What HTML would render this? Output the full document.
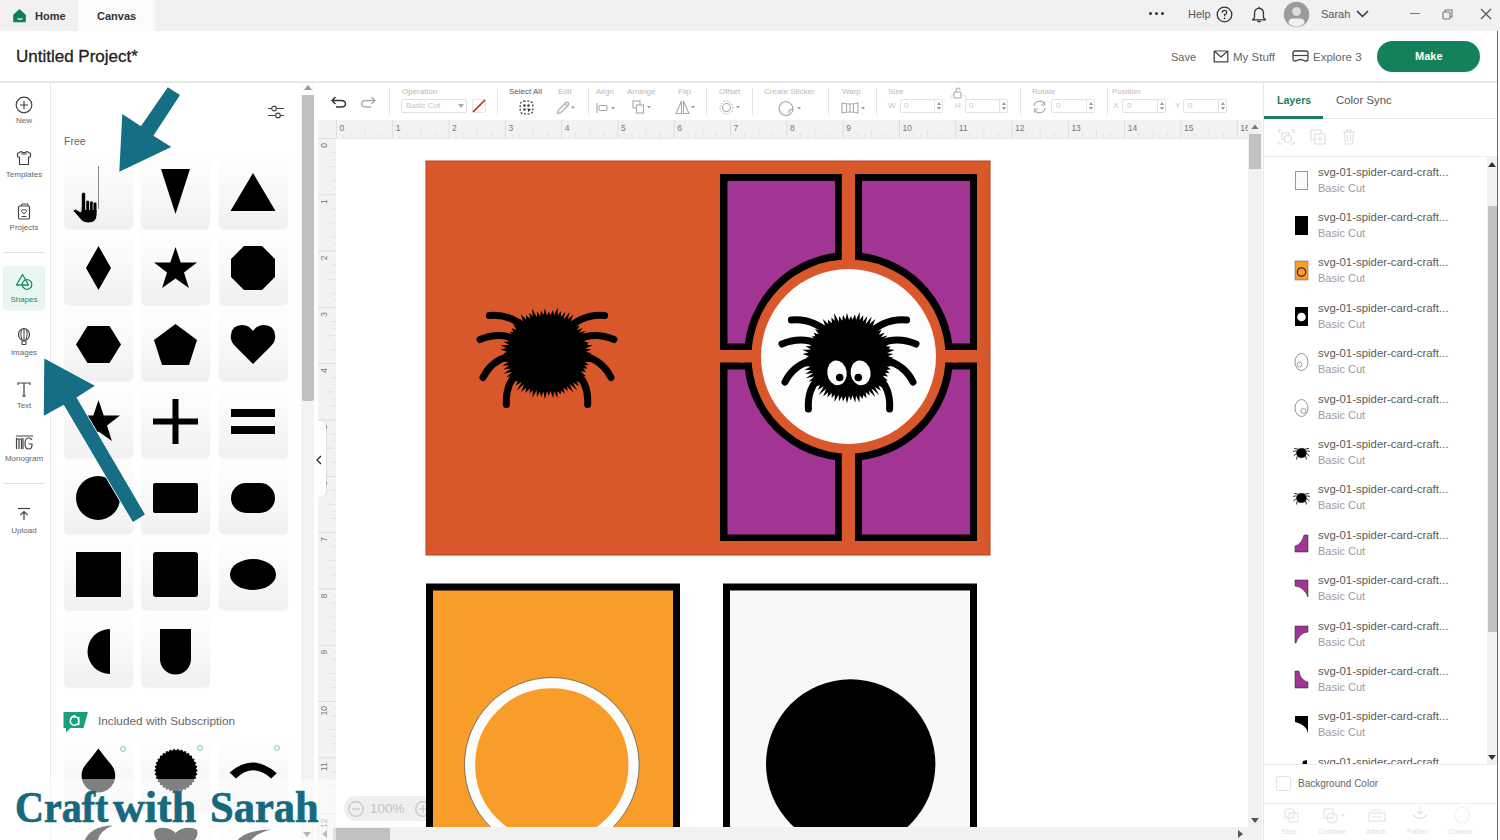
<!DOCTYPE html>
<html><head><meta charset="utf-8">
<style>
*{margin:0;padding:0;box-sizing:border-box}
html,body{width:1500px;height:840px;overflow:hidden;background:#fff;font-family:"Liberation Sans",sans-serif;color:#333}
.a{position:absolute}
.t{position:absolute;white-space:nowrap;line-height:1}
svg{position:absolute;overflow:visible}
.inp{position:absolute;height:14px;border:1px solid #e4e4e4;border-radius:2px}
.wm{top:786px;font-family:'Liberation Serif',serif;font-weight:bold;font-size:44px;color:#166a80;-webkit-text-stroke:0.7px #166a80;transform-origin:0 0}
.tile{position:absolute;width:69px;height:74px;border-radius:5px;background:linear-gradient(#fefefe 0%,#f9f9f9 45%,#f0f0f0 100%);box-shadow:0 1px 1.5px rgba(0,0,0,0.05)}
</style></head><body>
<!-- TITLE BAR -->
<div class="a" style="left:0;top:0;width:1500px;height:31px;background:#f1f1f1"></div>
<div class="a" style="left:78px;top:0;width:77px;height:31px;background:#fbfbfb"></div>
<svg style="left:12.5px;top:9px" width="13" height="14" viewBox="0 0 13 14"><path d="M1,6 L6.5,1.2 L12,6 L12,12.5 L1,12.5Z" fill="#0f7f52" stroke="#0f7f52" stroke-width="1.6" stroke-linejoin="round"/><path d="M4.5,9.5 Q7,11 9.5,9.5" stroke="#d9efe5" stroke-width="1.4" fill="none"/></svg>
<div class="t" style="left:35px;top:11px;font-size:11px;font-weight:bold;color:#333">Home</div>
<div class="t" style="left:97px;top:11px;font-size:11px;font-weight:bold;color:#333">Canvas</div>

<!-- HEADER -->
<div class="a" style="left:0;top:31px;width:1497px;height:52px;background:#fff;border-bottom:2px solid #e8e8e8"></div>
<div class="t" style="left:16px;top:48px;font-size:17px;color:#222;-webkit-text-stroke:0.3px #222">Untitled Project*</div>


<!-- title right -->
<div class="a" style="left:1149px;top:12px;width:3px;height:3px;border-radius:50%;background:#333"></div>
<div class="a" style="left:1155px;top:12px;width:3px;height:3px;border-radius:50%;background:#333"></div>
<div class="a" style="left:1161px;top:12px;width:3px;height:3px;border-radius:50%;background:#333"></div>
<div class="t" style="left:1188px;top:9px;font-size:11px;color:#555">Help</div>
<svg style="left:1216px;top:6px" width="17" height="17" viewBox="0 0 17 17"><circle cx="8.5" cy="8.5" r="7.3" fill="none" stroke="#333" stroke-width="1.3"/><path d="M6.2,6.6 Q6.3,4.4 8.5,4.4 Q10.7,4.4 10.7,6.4 Q10.7,7.8 8.6,8.6 L8.6,10.2" fill="none" stroke="#333" stroke-width="1.3"/><circle cx="8.6" cy="12.4" r="0.9" fill="#333"/></svg>
<svg style="left:1251px;top:6px" width="16" height="17" viewBox="0 0 16 17"><path d="M3.5,11.5 L3.5,7.5 Q3.5,2.3 8,2.3 Q12.5,2.3 12.5,7.5 L12.5,11.5 Q13,13 14.5,13.8 L1.5,13.8 Q3,13 3.5,11.5Z" fill="none" stroke="#333" stroke-width="1.3" stroke-linejoin="round"/><path d="M6.5,15 Q8,16.6 9.5,15" fill="none" stroke="#333" stroke-width="1.3"/><path d="M8,0.8 L8,2.3" stroke="#333" stroke-width="1.3"/></svg>
<svg style="left:1283px;top:1px" width="27" height="27" viewBox="0 0 27 27"><circle cx="13.5" cy="13.5" r="12.7" fill="#9b9b9b"/><circle cx="13.5" cy="10.5" r="4.8" fill="#dedede" stroke="#8a8a8a" stroke-width="0.6"/><path d="M5.5,22 Q5.5,17.5 10,17.5 L17,17.5 Q21.5,17.5 21.5,22 Q18,25.8 13.5,25.8 Q9,25.8 5.5,22Z" fill="#efefef"/></svg>
<div class="t" style="left:1321px;top:9px;font-size:11px;color:#555">Sarah</div>
<svg style="left:1356px;top:10px" width="13" height="8" viewBox="0 0 13 8"><path d="M1,1 L6.5,6.5 L12,1" fill="none" stroke="#333" stroke-width="1.5"/></svg>
<div class="a" style="left:1410px;top:13px;width:10px;height:1px;background:#777"></div>
<svg style="left:1442px;top:9px" width="11" height="11" viewBox="0 0 11 11"><rect x="1" y="3" width="7" height="7" fill="none" stroke="#777" stroke-width="1.1" rx="1"/><path d="M3,3 L3,1 L10,1 L10,8 L8,8" fill="none" stroke="#777" stroke-width="1.1"/></svg>
<svg style="left:1480px;top:8px" width="12" height="12" viewBox="0 0 12 12"><path d="M1,1 L11,11 M11,1 L1,11" stroke="#555" stroke-width="1.2"/></svg>
<!-- header right -->
<div class="t" style="left:1171px;top:52px;font-size:11px;color:#666">Save</div>
<svg style="left:1213px;top:49px" width="16" height="14" viewBox="0 0 16 14"><path d="M1.2,2 L1.2,12.8 L14.8,12.8 L14.8,2" fill="none" stroke="#444" stroke-width="1.3" stroke-linejoin="round"/><path d="M1.2,2 L8,8 L14.8,2 M1.2,2 L14.8,2" fill="none" stroke="#444" stroke-width="1.2" stroke-linejoin="round"/></svg>
<div class="t" style="left:1233px;top:52px;font-size:11.5px;color:#666">My Stuff</div>
<svg style="left:1292px;top:50px" width="17" height="12" viewBox="0 0 17 12"><path d="M3,1 L14,1 Q16,1 16,3 L16,9 Q16,11 14,11 L13,11 Q8.5,8 4,11 L3,11 Q1,11 1,9 L1,3 Q1,1 3,1Z" fill="none" stroke="#444" stroke-width="1.3"/><path d="M1,5.5 L16,5.5" stroke="#444" stroke-width="1.2"/></svg>
<div class="t" style="left:1313px;top:52px;font-size:11.5px;color:#666">Explore 3</div>
<div class="a" style="left:1377px;top:41px;width:103px;height:31px;border-radius:16px;background:#148258"></div>
<div class="t" style="left:1415px;top:51px;font-size:11px;font-weight:bold;color:#fff">Make</div>

<!-- LEFT RAIL -->
<div class="a" style="left:0;top:83px;width:51px;height:757px;background:#fff;border-right:1px solid #ebebeb"></div>


<!-- rail items -->
<svg style="left:15px;top:96px" width="18" height="18" viewBox="0 0 18 18"><circle cx="9" cy="9" r="7.8" fill="none" stroke="#444" stroke-width="1.2"/><path d="M9,5 L9,13 M5,9 L13,9" stroke="#444" stroke-width="1.2"/></svg>
<div class="t" style="left:0;width:48px;text-align:center;top:117px;font-size:8px;color:#666">New</div>
<svg style="left:16px;top:150px" width="16" height="16" viewBox="0 0 16 16"><path d="M5,1.5 L1.5,3.5 L1.5,7 L3.5,7 L3.5,14.5 L12.5,14.5 L12.5,7 L14.5,7 L14.5,3.5 L11,1.5 Q8,4 5,1.5Z" fill="none" stroke="#444" stroke-width="1.2" stroke-linejoin="round"/><path d="M5,4 L11,4" stroke="#444" stroke-width="1"/></svg>
<div class="t" style="left:0;width:48px;text-align:center;top:171px;font-size:8px;color:#666">Templates</div>
<svg style="left:17px;top:203px" width="14" height="17" viewBox="0 0 14 17"><rect x="1.5" y="3" width="11" height="13" rx="1.5" fill="none" stroke="#444" stroke-width="1.2"/><path d="M4,3 L5,1 L11,1 L11,3" fill="none" stroke="#444" stroke-width="1"/><path d="M7,11 L4.8,8.8 Q4,7.6 5.2,6.8 Q6.4,6.3 7,7.3 Q7.6,6.3 8.8,6.8 Q10,7.6 9.2,8.8Z" fill="none" stroke="#444" stroke-width="1"/><path d="M4.5,13.5 L9.5,13.5" stroke="#444" stroke-width="1"/></svg>
<div class="t" style="left:0;width:48px;text-align:center;top:224px;font-size:8px;color:#666">Projects</div>
<div class="a" style="left:3px;top:252px;width:42px;height:1px;background:#e3e3e3"></div>
<div class="a" style="left:3px;top:266px;width:42px;height:45px;border-radius:4px;background:#eaf6f1"></div>
<svg style="left:15px;top:273px" width="19" height="18" viewBox="0 0 19 18"><path d="M7.5,1.5 L1.5,12 L13.5,12Z" fill="none" stroke="#1a8a64" stroke-width="1.3" stroke-linejoin="round"/><circle cx="12" cy="11.5" r="4.8" fill="none" stroke="#1a8a64" stroke-width="1.3"/></svg>
<div class="t" style="left:0;width:48px;text-align:center;top:296px;font-size:8px;color:#1a8a64">Shapes</div>
<svg style="left:17px;top:328px" width="14" height="18" viewBox="0 0 14 18"><ellipse cx="7" cy="6.5" rx="5.5" ry="5.8" fill="none" stroke="#444" stroke-width="1.2"/><path d="M7,0.8 L7,12.3 M4.3,1.8 Q3,7 5,12 M9.7,1.8 Q11,7 9,12" fill="none" stroke="#444" stroke-width="1"/><rect x="5" y="13" width="4" height="3.5" rx="0.5" fill="none" stroke="#444" stroke-width="1.1"/></svg>
<div class="t" style="left:0;width:48px;text-align:center;top:349px;font-size:8px;color:#666">Images</div>
<svg style="left:17px;top:382px" width="14" height="15" viewBox="0 0 14 15"><path d="M1,3 L1,1 L13,1 L13,3 M7,1 L7,14 M5,14 L9,14" fill="none" stroke="#444" stroke-width="1.2"/></svg>
<div class="t" style="left:0;width:48px;text-align:center;top:402px;font-size:8px;color:#666">Text</div>
<svg style="left:15px;top:435px" width="19" height="15" viewBox="0 0 19 15"><path d="M1,1 L18,1" stroke="#444" stroke-width="1"/><path d="M1.5,14 L1.5,4 L4,4 L4,14 M4,4 L6.5,4 L6.5,14 M1.5,4 L1.5,3" fill="none" stroke="#444" stroke-width="1.2"/><path d="M8,3 L8,14" stroke="#444" stroke-width="1.2"/><path d="M17,5 Q16,3 13.5,3 Q10,3 10,8.5 Q10,14 13.5,14 Q17,14 17,10 L17,9 L13.5,9" fill="none" stroke="#444" stroke-width="1.2"/></svg>
<div class="t" style="left:0;width:48px;text-align:center;top:455px;font-size:8px;color:#666">Monogram</div>
<div class="a" style="left:3px;top:483px;width:42px;height:1px;background:#e3e3e3"></div>
<svg style="left:17px;top:507px" width="14" height="14" viewBox="0 0 14 14"><path d="M1,1.5 L13,1.5" stroke="#444" stroke-width="1.2"/><path d="M7,13 L7,4.5 M3.5,8 L7,4.5 L10.5,8" fill="none" stroke="#444" stroke-width="1.2"/></svg>
<div class="t" style="left:0;width:48px;text-align:center;top:527px;font-size:8px;color:#666">Upload</div>

<!-- PANEL -->
<div class="a" style="left:51px;top:83px;width:250px;height:757px;background:#fff"></div>
<div class="a" style="left:301px;top:83px;width:15px;height:757px;background:#f3f3f3"></div>
<div class="a" style="left:301px;top:83px;width:15px;height:12px;background:#fafafa"></div>


<!-- panel content -->
<div class="t" style="left:64px;top:136px;font-size:10.5px;color:#666">Free</div>
<svg style="left:267px;top:104px" width="18" height="16" viewBox="0 0 18 16"><path d="M1,4.5 L17,4.5 M1,11.5 L17,11.5" stroke="#444" stroke-width="1.2"/><circle cx="7" cy="4.5" r="2.3" fill="#fff" stroke="#444" stroke-width="1.2"/><circle cx="11" cy="11.5" r="2.3" fill="#fff" stroke="#444" stroke-width="1.2"/></svg>
<div class="tile" style="left:64px;top:155px"></div>
<div class="tile" style="left:141px;top:155px"></div>
<div class="tile" style="left:219px;top:155px"></div>
<div class="tile" style="left:64px;top:231px"></div>
<div class="tile" style="left:141px;top:231px"></div>
<div class="tile" style="left:219px;top:231px"></div>
<div class="tile" style="left:64px;top:307px"></div>
<div class="tile" style="left:141px;top:307px"></div>
<div class="tile" style="left:219px;top:307px"></div>
<div class="tile" style="left:64px;top:384px"></div>
<div class="tile" style="left:141px;top:384px"></div>
<div class="tile" style="left:219px;top:384px"></div>
<div class="tile" style="left:64px;top:460px"></div>
<div class="tile" style="left:141px;top:460px"></div>
<div class="tile" style="left:219px;top:460px"></div>
<div class="tile" style="left:64px;top:536px"></div>
<div class="tile" style="left:141px;top:536px"></div>
<div class="tile" style="left:219px;top:536px"></div>
<div class="tile" style="left:64px;top:613px"></div>
<div class="tile" style="left:141px;top:613px"></div>
<div class="tile" style="left:64px;top:738px"></div>
<div class="tile" style="left:64px;top:814px"></div>
<div class="tile" style="left:141px;top:738px"></div>
<div class="tile" style="left:141px;top:814px"></div>
<div class="tile" style="left:219px;top:738px"></div>
<div class="tile" style="left:219px;top:814px"></div>

<svg style="left:0;top:0" width="300" height="840" viewBox="0 0 300 840">
<path d="M161,169 L190,169 L175.5,214Z" fill="#000"/>
<path d="M253,173 L275.5,211 L230.5,211Z" fill="#000"/>
<path d="M98.5,246 L111,268 L98.5,290 L86,268Z" fill="#000"/>
<path id="star" d="M175.5,247 L180.7,262.5 L197,262.6 L184,272.4 L188.9,288 L175.5,278.5 L162.1,288 L167,272.4 L154,262.6 L170.3,262.5Z" fill="#000"/>
<path d="M244,246 L262,246 L275,259 L275,277 L262,290 L244,290 L231,277 L231,259Z" fill="#000"/>
<path d="M87.5,326 L109.5,326 L121,344.5 L109.5,363 L87.5,363 L76,344.5Z" fill="#000"/>
<path d="M175.5,324 L197,340 L189,365 L162,365 L154,340Z" fill="#000"/>
<path d="M253,364 L235,346 Q230,341 231,335 Q232,325 242,325 Q249,325 253,331 Q257,325 264,325 Q274,325 275,335 Q276,341 271,346Z" fill="#000"/>
<path d="M98.5,400 L103.7,415.5 L120,415.6 L107,425.4 L111.9,441 L98.5,431.5 L85.1,441 L90,425.4 L77,415.6 L93.3,415.5Z" fill="#000"/>
<path d="M172.5,399 L178.5,399 L178.5,418.5 L198,418.5 L198,424.5 L178.5,424.5 L178.5,444 L172.5,444 L172.5,424.5 L153,424.5 L153,418.5 L172.5,418.5Z" fill="#000"/>
<rect x="231" y="409" width="44" height="8" fill="#000"/><rect x="231" y="426" width="44" height="8" fill="#000"/>
<circle cx="98" cy="498" r="22" fill="#000"/>
<rect x="153" y="483" width="45" height="30" rx="2" fill="#000"/>
<rect x="231" y="483" width="44" height="30" rx="15" fill="#000"/>
<rect x="76" y="552" width="45" height="45" fill="#000"/>
<rect x="153" y="552" width="45" height="45" rx="3" fill="#000"/>
<ellipse cx="253" cy="574.5" rx="23" ry="15.5" fill="#000"/>
<path d="M110,629 L110,674 A22.5,22.5 0 0 1 110,629Z" fill="#000"/>
<path d="M160,629 L191,629 L191,659 A15.5,15.5 0 0 1 160,659Z" fill="#000"/>
<!-- subscription shapes -->
<path d="M98.4,748.4 Q104,756 111.6,765.2 A16.8,16.8 0 1 1 85.2,765.2 Q92.8,756 98.4,748.4Z" fill="#000"/>
<path d="M197.8,770.4 L195.9,772.2 L197.4,774.4 L195.2,775.9 L196.3,778.3 L193.9,779.3 L194.5,781.9 L192.0,782.5 L192.1,785.1 L189.5,785.2 L189.1,787.8 L186.5,787.4 L185.7,789.9 L183.2,789.0 L182.0,791.4 L179.7,790.1 L178.0,792.1 L176.0,790.4 L174.0,792.1 L172.3,790.1 L170.0,791.4 L168.8,789.0 L166.3,789.9 L165.5,787.4 L162.9,787.8 L162.5,785.2 L159.9,785.1 L160.0,782.5 L157.5,781.9 L158.1,779.3 L155.7,778.3 L156.8,775.9 L154.6,774.4 L156.1,772.2 L154.2,770.4 L156.1,768.6 L154.6,766.4 L156.8,764.9 L155.7,762.5 L158.1,761.5 L157.5,758.9 L160.0,758.3 L159.9,755.7 L162.5,755.6 L162.9,753.0 L165.5,753.4 L166.3,750.9 L168.8,751.8 L170.0,749.4 L172.3,750.7 L174.0,748.7 L176.0,750.4 L178.0,748.7 L179.7,750.7 L182.0,749.4 L183.2,751.8 L185.7,750.9 L186.5,753.4 L189.1,753.0 L189.5,755.6 L192.1,755.7 L192.0,758.3 L194.5,758.9 L193.9,761.5 L196.3,762.5 L195.2,764.9 L197.4,766.4 L195.9,768.6Z" fill="#000"/>
<path d="M229.6,772.4 Q253,752 276.8,773.2 L271.2,778.5 Q253,762 236,778.5Z" fill="#000"/>
<path d="M84,842 Q90,826 113,825.6 Q100,830 97,842Z" fill="#000"/>
<path d="M158,842 Q152,834 155,830 Q159,827 166,828 Q172,829 175.6,833 Q179,829 185,828 Q193,827 197,830 Q199,836 193,842Z" fill="#000"/>
<path d="M236,842 Q244,830 271.2,829.6 Q254,834 250,842Z" fill="#000"/>
</svg>
<div class="a" style="left:120px;top:745.5px;width:6px;height:6px;border-radius:50%;border:1.2px solid #7bcdb5"></div>
<div class="a" style="left:197px;top:745px;width:6px;height:6px;border-radius:50%;border:1.2px solid #7bcdb5"></div>
<div class="a" style="left:274px;top:745px;width:6px;height:6px;border-radius:50%;border:1.2px solid #7bcdb5"></div>
<svg style="left:63px;top:711px" width="26" height="22" viewBox="0 0 26 22"><path d="M0.5,1 L25,1 L20.5,17 L7.5,17 L3,21.5 L3,17 L0.5,17Z" fill="#17a07a"/><circle cx="11.5" cy="10" r="4.2" fill="none" stroke="#fff" stroke-width="1.5"/><path d="M15.7,6 L15.7,14.2 M7.5,8.5 Q9,4.5 12.5,4.8" fill="none" stroke="#fff" stroke-width="1.5"/></svg>
<div class="t" style="left:98px;top:716px;font-size:11.8px;color:#666">Included with Subscription</div>
<!-- hand cursor -->
<div class="a" style="left:98px;top:166px;width:1px;height:43px;background:#8a8a8a"></div>
<svg style="left:0;top:0" width="120" height="240" viewBox="0 0 120 240"><g stroke="#fff" stroke-width="0.7"><path d="M80.5,207 L96.8,207 L96.8,214.5 Q96.8,222.8 88.5,222.8 Q83,222.8 80,218.5 L73.6,211.5 Q73,209 75.8,209.2 L80.5,212Z" fill="#000"/><rect x="81.4" y="192.3" width="4.2" height="20" rx="2.1" fill="#000"/><rect x="85.8" y="200.2" width="3.9" height="12" rx="1.9" fill="#000"/><rect x="89.6" y="201" width="3.9" height="12" rx="1.9" fill="#000"/><rect x="93.1" y="202" width="3.8" height="12" rx="1.9" fill="#000"/></g><path d="M81.8,210 L96.4,210 L96.4,215 Q96.4,222.2 88.5,222.2 Q83.3,222.2 80.5,218.3 L74.2,211.3 L81.8,214Z" fill="#000"/></svg>

<!-- TOOLBAR -->
<div class="a" style="left:316px;top:83px;width:947px;height:37px;background:#fff;border-left:1px solid #eaeaea"></div>

<!-- panel scrollbar -->
<div class="a" style="left:302px;top:95px;width:11.5px;height:306px;background:#bfbfbf;border-radius:0 0 2px 2px"></div>
<svg style="left:304px;top:85px" width="8" height="5" viewBox="0 0 8 5"><path d="M0,5 L4,0 L8,5Z" fill="#999"/></svg>
<svg style="left:303px;top:832px" width="8" height="5" viewBox="0 0 8 5"><path d="M0,0 L4,5 L8,0Z" fill="#666"/></svg>
<!-- toolbar content -->
<svg style="left:331px;top:96px" width="16" height="12" viewBox="0 0 16 12"><path d="M4.5,1 L1,4.5 L4.5,8 M1,4.5 L10,4.5 Q14.5,4.5 14.5,7.8 Q14.5,11 10,11 L5,11" fill="none" stroke="#333" stroke-width="1.4"/></svg>
<svg style="left:360px;top:96px" width="16" height="12" viewBox="0 0 16 12"><path d="M11.5,1 L15,4.5 L11.5,8 M15,4.5 L6,4.5 Q1.5,4.5 1.5,7.8 Q1.5,11 6,11 L11,11" fill="none" stroke="#aaa" stroke-width="1.3"/></svg>
<div class="a" style="left:389px;top:88px;width:1px;height:27px;background:#e4e4e4"></div>
<div class="t" style="left:402px;top:88px;font-size:8px;color:#b5b5b5">Operation</div>
<div class="a" style="left:401px;top:99px;width:66px;height:14px;border:1px solid #e2e2e2;border-radius:2px"></div>
<div class="t" style="left:406px;top:102px;font-size:8px;color:#c5c5c5">Basic Cut</div>
<svg style="left:458px;top:104px" width="6" height="4" viewBox="0 0 6 4"><path d="M0,0 L3,4 L6,0Z" fill="#aaa"/></svg>
<div class="a" style="left:472px;top:99px;width:14px;height:14px;border:1px solid #e6e6e6;border-radius:2px"></div>
<svg style="left:472px;top:99px" width="14" height="14" viewBox="0 0 14 14"><path d="M1,13 L13,1" stroke="#c81e1e" stroke-width="1.6"/></svg>
<div class="a" style="left:497px;top:88px;width:1px;height:27px;background:#e4e4e4"></div>
<div class="t" style="left:509px;top:88px;font-size:8px;color:#555">Select All</div>
<svg style="left:519px;top:100px" width="15" height="15" viewBox="0 0 15 15"><rect x="1.2" y="1.2" width="12.6" height="12.6" rx="3.5" fill="none" stroke="#444" stroke-width="1.3" stroke-dasharray="2 1.6"/><circle cx="5.5" cy="5.5" r="1.3" fill="#444"/><circle cx="9.5" cy="5.5" r="1.3" fill="#444"/><circle cx="5.5" cy="9.5" r="1.3" fill="#444"/><path d="M8.3,8.3 L12.3,9.6 L10.4,10.4 L9.6,12.3Z" fill="#222"/></svg>
<div class="t" style="left:558px;top:88px;font-size:8px;color:#bbb">Edit</div>
<svg style="left:556px;top:100px" width="20" height="15" viewBox="0 0 20 15"><path d="M1.5,13.5 L2.5,10 L10,2.5 Q11,1.5 12,2.5 L12.5,3 Q13.5,4 12.5,5 L5,12.5Z M9,3.5 L11.5,6" fill="none" stroke="#aaa" stroke-width="1.1"/><path d="M15,6.5 L19,6.5 L17,9Z" fill="#999"/></svg>
<div class="a" style="left:588px;top:88px;width:1px;height:27px;background:#e4e4e4"></div>
<div class="t" style="left:596px;top:88px;font-size:8px;color:#bbb">Align</div>
<svg style="left:596px;top:102px" width="20" height="12" viewBox="0 0 20 12"><path d="M1,1 L1,11" stroke="#aaa" stroke-width="1.1"/><rect x="3" y="3.5" width="8" height="5" rx="1" fill="none" stroke="#aaa" stroke-width="1.1"/><path d="M15,5 L19,5 L17,7.5Z" fill="#999"/></svg>
<div class="t" style="left:627px;top:88px;font-size:8px;color:#bbb">Arrange</div>
<svg style="left:632px;top:100px" width="20" height="15" viewBox="0 0 20 15"><rect x="1" y="1" width="7" height="7" fill="none" stroke="#aaa" stroke-width="1.1"/><rect x="4.5" y="5" width="7" height="8" fill="#fff" stroke="#aaa" stroke-width="1.1"/><path d="M15,6 L19,6 L17,8.5Z" fill="#999"/></svg>
<div class="t" style="left:678px;top:88px;font-size:8px;color:#bbb">Flip</div>
<svg style="left:675px;top:100px" width="21" height="15" viewBox="0 0 21 15"><path d="M6.5,1 L1,13.5 L6.5,13.5Z M8.5,1 L14,13.5 L8.5,13.5Z" fill="none" stroke="#aaa" stroke-width="1.1"/><path d="M16,6 L20,6 L18,8.5Z" fill="#999"/></svg>
<div class="a" style="left:706px;top:88px;width:1px;height:27px;background:#e4e4e4"></div>
<div class="t" style="left:719px;top:88px;font-size:8px;color:#bbb">Offset</div>
<svg style="left:719px;top:100px" width="22" height="15" viewBox="0 0 22 15"><circle cx="7.5" cy="7.5" r="4" fill="none" stroke="#aaa" stroke-width="1.1"/><circle cx="7.5" cy="7.5" r="6.5" fill="none" stroke="#aaa" stroke-width="1" stroke-dasharray="1.5 1.5"/><path d="M17,6 L21,6 L19,8.5Z" fill="#999"/></svg>
<div class="a" style="left:752px;top:88px;width:1px;height:27px;background:#e4e4e4"></div>
<div class="t" style="left:764px;top:88px;font-size:8px;color:#bbb">Create Sticker</div>
<svg style="left:778px;top:100px" width="25" height="17" viewBox="0 0 25 17"><path d="M8.5,1.5 A7,7 0 1 0 15,9.5 Q11,9 10.5,13 M15,9.5 Q15.5,4 8.5,1.5" fill="none" stroke="#aaa" stroke-width="1.2"/><path d="M19,7 L23,7 L21,9.5Z" fill="#999"/></svg>
<div class="a" style="left:828px;top:88px;width:1px;height:27px;background:#e4e4e4"></div>
<div class="t" style="left:842px;top:88px;font-size:8px;color:#bbb">Warp</div>
<svg style="left:841px;top:102px" width="26" height="12" viewBox="0 0 26 12"><path d="M1,1 Q9,3 17,1 L17,11 Q9,9 1,11Z M5.5,2 L5.5,10 M9,2.5 L9,9.5 M12.5,2 L12.5,10" fill="none" stroke="#aaa" stroke-width="1.1"/><path d="M20,5 L24,5 L22,7.5Z" fill="#999"/></svg>
<div class="a" style="left:876px;top:88px;width:1px;height:27px;background:#e4e4e4"></div>
<div class="t" style="left:888px;top:88px;font-size:8px;color:#bbb">Size</div>
<div class="t" style="left:888px;top:102px;font-size:8px;color:#c5c5c5">W</div>
<div class="inp" style="left:900px;top:99px;width:43px"></div><div class="a" style="left:934px;top:99px;width:1px;height:14px;background:#e4e4e4"></div><svg style="left:935px;top:99px" width="8" height="14" viewBox="0 0 8 14"><path d="M2,6 L4,3 L6,6Z M2,8 L4,11 L6,8Z" fill="#9a9a9a"/></svg>
<div class="t" style="left:904px;top:102px;font-size:8px;color:#c8c8c8">0</div>
<svg style="left:949px;top:87px" width="18" height="13" viewBox="0 0 18 13"><rect x="5" y="5" width="7" height="6" rx="1" fill="none" stroke="#aaa" stroke-width="1.1"/><path d="M7,5 L7,3 Q7,1 9,1 Q11,1 11,3" fill="none" stroke="#aaa" stroke-width="1.1"/><path d="M1,12 Q1,8 4,8 M14,8 Q17,8 17,12" fill="none" stroke="#ddd" stroke-width="1"/></svg>
<div class="t" style="left:955px;top:102px;font-size:8px;color:#c5c5c5">H</div>
<div class="inp" style="left:965px;top:99px;width:43px"></div><div class="a" style="left:999px;top:99px;width:1px;height:14px;background:#e4e4e4"></div><svg style="left:1000px;top:99px" width="8" height="14" viewBox="0 0 8 14"><path d="M2,6 L4,3 L6,6Z M2,8 L4,11 L6,8Z" fill="#9a9a9a"/></svg>
<div class="t" style="left:969px;top:102px;font-size:8px;color:#c8c8c8">0</div>
<div class="a" style="left:1020px;top:88px;width:1px;height:27px;background:#e4e4e4"></div>
<div class="t" style="left:1032px;top:88px;font-size:8px;color:#bbb">Rotate</div>
<svg style="left:1032px;top:100px" width="15" height="14" viewBox="0 0 15 14"><path d="M2,6 A5.5,5.5 0 0 1 12.5,4.5 M13,8 A5.5,5.5 0 0 1 2.5,9.5" fill="none" stroke="#aaa" stroke-width="1.2"/><path d="M12.5,1.5 L12.5,5 L9,5 M2.5,12.5 L2.5,9 L6,9" fill="none" stroke="#aaa" stroke-width="1.1"/></svg>
<div class="inp" style="left:1051px;top:99px;width:44px"></div><div class="a" style="left:1086px;top:99px;width:1px;height:14px;background:#e4e4e4"></div><svg style="left:1087px;top:99px" width="8" height="14" viewBox="0 0 8 14"><path d="M2,6 L4,3 L6,6Z M2,8 L4,11 L6,8Z" fill="#9a9a9a"/></svg>
<div class="t" style="left:1056px;top:102px;font-size:8px;color:#c8c8c8">0</div>
<div class="a" style="left:1107px;top:88px;width:1px;height:27px;background:#e4e4e4"></div>
<div class="t" style="left:1112px;top:88px;font-size:8px;color:#bbb">Position</div>
<div class="t" style="left:1113px;top:102px;font-size:8px;color:#c5c5c5">X</div>
<div class="inp" style="left:1122px;top:99px;width:44px"></div><div class="a" style="left:1157px;top:99px;width:1px;height:14px;background:#e4e4e4"></div><svg style="left:1158px;top:99px" width="8" height="14" viewBox="0 0 8 14"><path d="M2,6 L4,3 L6,6Z M2,8 L4,11 L6,8Z" fill="#9a9a9a"/></svg>
<div class="t" style="left:1127px;top:102px;font-size:8px;color:#c8c8c8">0</div>
<div class="t" style="left:1175px;top:102px;font-size:8px;color:#c5c5c5">Y</div>
<div class="inp" style="left:1183px;top:99px;width:44px"></div><div class="a" style="left:1218px;top:99px;width:1px;height:14px;background:#e4e4e4"></div><svg style="left:1219px;top:99px" width="8" height="14" viewBox="0 0 8 14"><path d="M2,6 L4,3 L6,6Z M2,8 L4,11 L6,8Z" fill="#9a9a9a"/></svg>
<div class="t" style="left:1188px;top:102px;font-size:8px;color:#c8c8c8">0</div>

<!-- RULER -->
<div class="a" style="left:314px;top:83px;width:4px;height:757px;background:#fff"></div>
<div class="a" style="left:318px;top:120px;width:930px;height:19px;background:#f2f2f2;border-bottom:1px solid #e6e6e6"></div>
<div class="a" style="left:318px;top:120px;width:19px;height:707px;background:#f2f2f2;border-right:1px solid #e6e6e6"></div>
<div class="a" style="left:336px;top:139px;width:912px;height:688px;background:#fff"></div>
<svg style="left:0;top:0" width="1500" height="840" viewBox="0 0 1500 840" font-family="Liberation Sans, sans-serif">
<path d="M336.5,120 L336.5,138" stroke="#dddddd" stroke-width="1"/>
<text x="339.5" y="130.5" font-size="8.5" fill="#777">0</text>
<path d="M343.5,135 L343.5,138" stroke="#e6e6e6" stroke-width="1"/>
<path d="M350.6,133 L350.6,138" stroke="#e3e3e3" stroke-width="1"/>
<path d="M357.6,135 L357.6,138" stroke="#e6e6e6" stroke-width="1"/>
<path d="M364.6,130 L364.6,138" stroke="#e3e3e3" stroke-width="1"/>
<path d="M371.7,135 L371.7,138" stroke="#e6e6e6" stroke-width="1"/>
<path d="M378.7,133 L378.7,138" stroke="#e3e3e3" stroke-width="1"/>
<path d="M385.8,135 L385.8,138" stroke="#e6e6e6" stroke-width="1"/>
<path d="M392.8,120 L392.8,138" stroke="#dddddd" stroke-width="1"/>
<text x="395.8" y="130.5" font-size="8.5" fill="#777">1</text>
<path d="M399.8,135 L399.8,138" stroke="#e6e6e6" stroke-width="1"/>
<path d="M406.9,133 L406.9,138" stroke="#e3e3e3" stroke-width="1"/>
<path d="M413.9,135 L413.9,138" stroke="#e6e6e6" stroke-width="1"/>
<path d="M420.9,130 L420.9,138" stroke="#e3e3e3" stroke-width="1"/>
<path d="M428.0,135 L428.0,138" stroke="#e6e6e6" stroke-width="1"/>
<path d="M435.0,133 L435.0,138" stroke="#e3e3e3" stroke-width="1"/>
<path d="M442.1,135 L442.1,138" stroke="#e6e6e6" stroke-width="1"/>
<path d="M449.1,120 L449.1,138" stroke="#dddddd" stroke-width="1"/>
<text x="452.1" y="130.5" font-size="8.5" fill="#777">2</text>
<path d="M456.1,135 L456.1,138" stroke="#e6e6e6" stroke-width="1"/>
<path d="M463.2,133 L463.2,138" stroke="#e3e3e3" stroke-width="1"/>
<path d="M470.2,135 L470.2,138" stroke="#e6e6e6" stroke-width="1"/>
<path d="M477.2,130 L477.2,138" stroke="#e3e3e3" stroke-width="1"/>
<path d="M484.3,135 L484.3,138" stroke="#e6e6e6" stroke-width="1"/>
<path d="M491.3,133 L491.3,138" stroke="#e3e3e3" stroke-width="1"/>
<path d="M498.4,135 L498.4,138" stroke="#e6e6e6" stroke-width="1"/>
<path d="M505.4,120 L505.4,138" stroke="#dddddd" stroke-width="1"/>
<text x="508.4" y="130.5" font-size="8.5" fill="#777">3</text>
<path d="M512.4,135 L512.4,138" stroke="#e6e6e6" stroke-width="1"/>
<path d="M519.5,133 L519.5,138" stroke="#e3e3e3" stroke-width="1"/>
<path d="M526.5,135 L526.5,138" stroke="#e6e6e6" stroke-width="1"/>
<path d="M533.5,130 L533.5,138" stroke="#e3e3e3" stroke-width="1"/>
<path d="M540.6,135 L540.6,138" stroke="#e6e6e6" stroke-width="1"/>
<path d="M547.6,133 L547.6,138" stroke="#e3e3e3" stroke-width="1"/>
<path d="M554.7,135 L554.7,138" stroke="#e6e6e6" stroke-width="1"/>
<path d="M561.7,120 L561.7,138" stroke="#dddddd" stroke-width="1"/>
<text x="564.7" y="130.5" font-size="8.5" fill="#777">4</text>
<path d="M568.7,135 L568.7,138" stroke="#e6e6e6" stroke-width="1"/>
<path d="M575.8,133 L575.8,138" stroke="#e3e3e3" stroke-width="1"/>
<path d="M582.8,135 L582.8,138" stroke="#e6e6e6" stroke-width="1"/>
<path d="M589.9,130 L589.9,138" stroke="#e3e3e3" stroke-width="1"/>
<path d="M596.9,135 L596.9,138" stroke="#e6e6e6" stroke-width="1"/>
<path d="M603.9,133 L603.9,138" stroke="#e3e3e3" stroke-width="1"/>
<path d="M611.0,135 L611.0,138" stroke="#e6e6e6" stroke-width="1"/>
<path d="M618.0,120 L618.0,138" stroke="#dddddd" stroke-width="1"/>
<text x="621.0" y="130.5" font-size="8.5" fill="#777">5</text>
<path d="M625.0,135 L625.0,138" stroke="#e6e6e6" stroke-width="1"/>
<path d="M632.1,133 L632.1,138" stroke="#e3e3e3" stroke-width="1"/>
<path d="M639.1,135 L639.1,138" stroke="#e6e6e6" stroke-width="1"/>
<path d="M646.1,130 L646.1,138" stroke="#e3e3e3" stroke-width="1"/>
<path d="M653.2,135 L653.2,138" stroke="#e6e6e6" stroke-width="1"/>
<path d="M660.2,133 L660.2,138" stroke="#e3e3e3" stroke-width="1"/>
<path d="M667.3,135 L667.3,138" stroke="#e6e6e6" stroke-width="1"/>
<path d="M674.3,120 L674.3,138" stroke="#dddddd" stroke-width="1"/>
<text x="677.3" y="130.5" font-size="8.5" fill="#777">6</text>
<path d="M681.3,135 L681.3,138" stroke="#e6e6e6" stroke-width="1"/>
<path d="M688.4,133 L688.4,138" stroke="#e3e3e3" stroke-width="1"/>
<path d="M695.4,135 L695.4,138" stroke="#e6e6e6" stroke-width="1"/>
<path d="M702.5,130 L702.5,138" stroke="#e3e3e3" stroke-width="1"/>
<path d="M709.5,135 L709.5,138" stroke="#e6e6e6" stroke-width="1"/>
<path d="M716.5,133 L716.5,138" stroke="#e3e3e3" stroke-width="1"/>
<path d="M723.6,135 L723.6,138" stroke="#e6e6e6" stroke-width="1"/>
<path d="M730.6,120 L730.6,138" stroke="#dddddd" stroke-width="1"/>
<text x="733.6" y="130.5" font-size="8.5" fill="#777">7</text>
<path d="M737.6,135 L737.6,138" stroke="#e6e6e6" stroke-width="1"/>
<path d="M744.7,133 L744.7,138" stroke="#e3e3e3" stroke-width="1"/>
<path d="M751.7,135 L751.7,138" stroke="#e6e6e6" stroke-width="1"/>
<path d="M758.8,130 L758.8,138" stroke="#e3e3e3" stroke-width="1"/>
<path d="M765.8,135 L765.8,138" stroke="#e6e6e6" stroke-width="1"/>
<path d="M772.8,133 L772.8,138" stroke="#e3e3e3" stroke-width="1"/>
<path d="M779.9,135 L779.9,138" stroke="#e6e6e6" stroke-width="1"/>
<path d="M786.9,120 L786.9,138" stroke="#dddddd" stroke-width="1"/>
<text x="789.9" y="130.5" font-size="8.5" fill="#777">8</text>
<path d="M793.9,135 L793.9,138" stroke="#e6e6e6" stroke-width="1"/>
<path d="M801.0,133 L801.0,138" stroke="#e3e3e3" stroke-width="1"/>
<path d="M808.0,135 L808.0,138" stroke="#e6e6e6" stroke-width="1"/>
<path d="M815.0,130 L815.0,138" stroke="#e3e3e3" stroke-width="1"/>
<path d="M822.1,135 L822.1,138" stroke="#e6e6e6" stroke-width="1"/>
<path d="M829.1,133 L829.1,138" stroke="#e3e3e3" stroke-width="1"/>
<path d="M836.2,135 L836.2,138" stroke="#e6e6e6" stroke-width="1"/>
<path d="M843.2,120 L843.2,138" stroke="#dddddd" stroke-width="1"/>
<text x="846.2" y="130.5" font-size="8.5" fill="#777">9</text>
<path d="M850.2,135 L850.2,138" stroke="#e6e6e6" stroke-width="1"/>
<path d="M857.3,133 L857.3,138" stroke="#e3e3e3" stroke-width="1"/>
<path d="M864.3,135 L864.3,138" stroke="#e6e6e6" stroke-width="1"/>
<path d="M871.4,130 L871.4,138" stroke="#e3e3e3" stroke-width="1"/>
<path d="M878.4,135 L878.4,138" stroke="#e6e6e6" stroke-width="1"/>
<path d="M885.4,133 L885.4,138" stroke="#e3e3e3" stroke-width="1"/>
<path d="M892.5,135 L892.5,138" stroke="#e6e6e6" stroke-width="1"/>
<path d="M899.5,120 L899.5,138" stroke="#dddddd" stroke-width="1"/>
<text x="902.5" y="130.5" font-size="8.5" fill="#777">10</text>
<path d="M906.5,135 L906.5,138" stroke="#e6e6e6" stroke-width="1"/>
<path d="M913.6,133 L913.6,138" stroke="#e3e3e3" stroke-width="1"/>
<path d="M920.6,135 L920.6,138" stroke="#e6e6e6" stroke-width="1"/>
<path d="M927.6,130 L927.6,138" stroke="#e3e3e3" stroke-width="1"/>
<path d="M934.7,135 L934.7,138" stroke="#e6e6e6" stroke-width="1"/>
<path d="M941.7,133 L941.7,138" stroke="#e3e3e3" stroke-width="1"/>
<path d="M948.8,135 L948.8,138" stroke="#e6e6e6" stroke-width="1"/>
<path d="M955.8,120 L955.8,138" stroke="#dddddd" stroke-width="1"/>
<text x="958.8" y="130.5" font-size="8.5" fill="#777">11</text>
<path d="M962.8,135 L962.8,138" stroke="#e6e6e6" stroke-width="1"/>
<path d="M969.9,133 L969.9,138" stroke="#e3e3e3" stroke-width="1"/>
<path d="M976.9,135 L976.9,138" stroke="#e6e6e6" stroke-width="1"/>
<path d="M983.9,130 L983.9,138" stroke="#e3e3e3" stroke-width="1"/>
<path d="M991.0,135 L991.0,138" stroke="#e6e6e6" stroke-width="1"/>
<path d="M998.0,133 L998.0,138" stroke="#e3e3e3" stroke-width="1"/>
<path d="M1005.1,135 L1005.1,138" stroke="#e6e6e6" stroke-width="1"/>
<path d="M1012.1,120 L1012.1,138" stroke="#dddddd" stroke-width="1"/>
<text x="1015.1" y="130.5" font-size="8.5" fill="#777">12</text>
<path d="M1019.1,135 L1019.1,138" stroke="#e6e6e6" stroke-width="1"/>
<path d="M1026.2,133 L1026.2,138" stroke="#e3e3e3" stroke-width="1"/>
<path d="M1033.2,135 L1033.2,138" stroke="#e6e6e6" stroke-width="1"/>
<path d="M1040.2,130 L1040.2,138" stroke="#e3e3e3" stroke-width="1"/>
<path d="M1047.3,135 L1047.3,138" stroke="#e6e6e6" stroke-width="1"/>
<path d="M1054.3,133 L1054.3,138" stroke="#e3e3e3" stroke-width="1"/>
<path d="M1061.4,135 L1061.4,138" stroke="#e6e6e6" stroke-width="1"/>
<path d="M1068.4,120 L1068.4,138" stroke="#dddddd" stroke-width="1"/>
<text x="1071.4" y="130.5" font-size="8.5" fill="#777">13</text>
<path d="M1075.4,135 L1075.4,138" stroke="#e6e6e6" stroke-width="1"/>
<path d="M1082.5,133 L1082.5,138" stroke="#e3e3e3" stroke-width="1"/>
<path d="M1089.5,135 L1089.5,138" stroke="#e6e6e6" stroke-width="1"/>
<path d="M1096.5,130 L1096.5,138" stroke="#e3e3e3" stroke-width="1"/>
<path d="M1103.6,135 L1103.6,138" stroke="#e6e6e6" stroke-width="1"/>
<path d="M1110.6,133 L1110.6,138" stroke="#e3e3e3" stroke-width="1"/>
<path d="M1117.7,135 L1117.7,138" stroke="#e6e6e6" stroke-width="1"/>
<path d="M1124.7,120 L1124.7,138" stroke="#dddddd" stroke-width="1"/>
<text x="1127.7" y="130.5" font-size="8.5" fill="#777">14</text>
<path d="M1131.7,135 L1131.7,138" stroke="#e6e6e6" stroke-width="1"/>
<path d="M1138.8,133 L1138.8,138" stroke="#e3e3e3" stroke-width="1"/>
<path d="M1145.8,135 L1145.8,138" stroke="#e6e6e6" stroke-width="1"/>
<path d="M1152.8,130 L1152.8,138" stroke="#e3e3e3" stroke-width="1"/>
<path d="M1159.9,135 L1159.9,138" stroke="#e6e6e6" stroke-width="1"/>
<path d="M1166.9,133 L1166.9,138" stroke="#e3e3e3" stroke-width="1"/>
<path d="M1174.0,135 L1174.0,138" stroke="#e6e6e6" stroke-width="1"/>
<path d="M1181.0,120 L1181.0,138" stroke="#dddddd" stroke-width="1"/>
<text x="1184.0" y="130.5" font-size="8.5" fill="#777">15</text>
<path d="M1188.0,135 L1188.0,138" stroke="#e6e6e6" stroke-width="1"/>
<path d="M1195.1,133 L1195.1,138" stroke="#e3e3e3" stroke-width="1"/>
<path d="M1202.1,135 L1202.1,138" stroke="#e6e6e6" stroke-width="1"/>
<path d="M1209.2,130 L1209.2,138" stroke="#e3e3e3" stroke-width="1"/>
<path d="M1216.2,135 L1216.2,138" stroke="#e6e6e6" stroke-width="1"/>
<path d="M1223.2,133 L1223.2,138" stroke="#e3e3e3" stroke-width="1"/>
<path d="M1230.3,135 L1230.3,138" stroke="#e6e6e6" stroke-width="1"/>
<path d="M1237.3,120 L1237.3,138" stroke="#dddddd" stroke-width="1"/>
<text x="1240.3" y="130.5" font-size="8.5" fill="#777">16</text>
<path d="M1244.3,135 L1244.3,138" stroke="#e6e6e6" stroke-width="1"/>
<path d="M318,138.5 L336,138.5" stroke="#dddddd" stroke-width="1"/>
<text x="0" y="0" font-size="8.5" fill="#777" transform="translate(327,143.0) rotate(-90)" text-anchor="end">0</text>
<path d="M333,145.5 L336,145.5" stroke="#e6e6e6" stroke-width="1"/>
<path d="M331,152.6 L336,152.6" stroke="#e3e3e3" stroke-width="1"/>
<path d="M333,159.6 L336,159.6" stroke="#e6e6e6" stroke-width="1"/>
<path d="M328,166.7 L336,166.7" stroke="#e3e3e3" stroke-width="1"/>
<path d="M333,173.7 L336,173.7" stroke="#e6e6e6" stroke-width="1"/>
<path d="M331,180.7 L336,180.7" stroke="#e3e3e3" stroke-width="1"/>
<path d="M333,187.8 L336,187.8" stroke="#e6e6e6" stroke-width="1"/>
<path d="M318,194.8 L336,194.8" stroke="#dddddd" stroke-width="1"/>
<text x="0" y="0" font-size="8.5" fill="#777" transform="translate(327,199.3) rotate(-90)" text-anchor="end">1</text>
<path d="M333,201.8 L336,201.8" stroke="#e6e6e6" stroke-width="1"/>
<path d="M331,208.9 L336,208.9" stroke="#e3e3e3" stroke-width="1"/>
<path d="M333,215.9 L336,215.9" stroke="#e6e6e6" stroke-width="1"/>
<path d="M328,222.9 L336,222.9" stroke="#e3e3e3" stroke-width="1"/>
<path d="M333,230.0 L336,230.0" stroke="#e6e6e6" stroke-width="1"/>
<path d="M331,237.0 L336,237.0" stroke="#e3e3e3" stroke-width="1"/>
<path d="M333,244.1 L336,244.1" stroke="#e6e6e6" stroke-width="1"/>
<path d="M318,251.1 L336,251.1" stroke="#dddddd" stroke-width="1"/>
<text x="0" y="0" font-size="8.5" fill="#777" transform="translate(327,255.6) rotate(-90)" text-anchor="end">2</text>
<path d="M333,258.1 L336,258.1" stroke="#e6e6e6" stroke-width="1"/>
<path d="M331,265.2 L336,265.2" stroke="#e3e3e3" stroke-width="1"/>
<path d="M333,272.2 L336,272.2" stroke="#e6e6e6" stroke-width="1"/>
<path d="M328,279.2 L336,279.2" stroke="#e3e3e3" stroke-width="1"/>
<path d="M333,286.3 L336,286.3" stroke="#e6e6e6" stroke-width="1"/>
<path d="M331,293.3 L336,293.3" stroke="#e3e3e3" stroke-width="1"/>
<path d="M333,300.4 L336,300.4" stroke="#e6e6e6" stroke-width="1"/>
<path d="M318,307.4 L336,307.4" stroke="#dddddd" stroke-width="1"/>
<text x="0" y="0" font-size="8.5" fill="#777" transform="translate(327,311.9) rotate(-90)" text-anchor="end">3</text>
<path d="M333,314.4 L336,314.4" stroke="#e6e6e6" stroke-width="1"/>
<path d="M331,321.5 L336,321.5" stroke="#e3e3e3" stroke-width="1"/>
<path d="M333,328.5 L336,328.5" stroke="#e6e6e6" stroke-width="1"/>
<path d="M328,335.5 L336,335.5" stroke="#e3e3e3" stroke-width="1"/>
<path d="M333,342.6 L336,342.6" stroke="#e6e6e6" stroke-width="1"/>
<path d="M331,349.6 L336,349.6" stroke="#e3e3e3" stroke-width="1"/>
<path d="M333,356.7 L336,356.7" stroke="#e6e6e6" stroke-width="1"/>
<path d="M318,363.7 L336,363.7" stroke="#dddddd" stroke-width="1"/>
<text x="0" y="0" font-size="8.5" fill="#777" transform="translate(327,368.2) rotate(-90)" text-anchor="end">4</text>
<path d="M333,370.7 L336,370.7" stroke="#e6e6e6" stroke-width="1"/>
<path d="M331,377.8 L336,377.8" stroke="#e3e3e3" stroke-width="1"/>
<path d="M333,384.8 L336,384.8" stroke="#e6e6e6" stroke-width="1"/>
<path d="M328,391.9 L336,391.9" stroke="#e3e3e3" stroke-width="1"/>
<path d="M333,398.9 L336,398.9" stroke="#e6e6e6" stroke-width="1"/>
<path d="M331,405.9 L336,405.9" stroke="#e3e3e3" stroke-width="1"/>
<path d="M333,413.0 L336,413.0" stroke="#e6e6e6" stroke-width="1"/>
<path d="M318,420.0 L336,420.0" stroke="#dddddd" stroke-width="1"/>
<text x="0" y="0" font-size="8.5" fill="#777" transform="translate(327,424.5) rotate(-90)" text-anchor="end">5</text>
<path d="M333,427.0 L336,427.0" stroke="#e6e6e6" stroke-width="1"/>
<path d="M331,434.1 L336,434.1" stroke="#e3e3e3" stroke-width="1"/>
<path d="M333,441.1 L336,441.1" stroke="#e6e6e6" stroke-width="1"/>
<path d="M328,448.1 L336,448.1" stroke="#e3e3e3" stroke-width="1"/>
<path d="M333,455.2 L336,455.2" stroke="#e6e6e6" stroke-width="1"/>
<path d="M331,462.2 L336,462.2" stroke="#e3e3e3" stroke-width="1"/>
<path d="M333,469.3 L336,469.3" stroke="#e6e6e6" stroke-width="1"/>
<path d="M318,476.3 L336,476.3" stroke="#dddddd" stroke-width="1"/>
<text x="0" y="0" font-size="8.5" fill="#777" transform="translate(327,480.8) rotate(-90)" text-anchor="end">6</text>
<path d="M333,483.3 L336,483.3" stroke="#e6e6e6" stroke-width="1"/>
<path d="M331,490.4 L336,490.4" stroke="#e3e3e3" stroke-width="1"/>
<path d="M333,497.4 L336,497.4" stroke="#e6e6e6" stroke-width="1"/>
<path d="M328,504.4 L336,504.4" stroke="#e3e3e3" stroke-width="1"/>
<path d="M333,511.5 L336,511.5" stroke="#e6e6e6" stroke-width="1"/>
<path d="M331,518.5 L336,518.5" stroke="#e3e3e3" stroke-width="1"/>
<path d="M333,525.6 L336,525.6" stroke="#e6e6e6" stroke-width="1"/>
<path d="M318,532.6 L336,532.6" stroke="#dddddd" stroke-width="1"/>
<text x="0" y="0" font-size="8.5" fill="#777" transform="translate(327,537.1) rotate(-90)" text-anchor="end">7</text>
<path d="M333,539.6 L336,539.6" stroke="#e6e6e6" stroke-width="1"/>
<path d="M331,546.7 L336,546.7" stroke="#e3e3e3" stroke-width="1"/>
<path d="M333,553.7 L336,553.7" stroke="#e6e6e6" stroke-width="1"/>
<path d="M328,560.8 L336,560.8" stroke="#e3e3e3" stroke-width="1"/>
<path d="M333,567.8 L336,567.8" stroke="#e6e6e6" stroke-width="1"/>
<path d="M331,574.8 L336,574.8" stroke="#e3e3e3" stroke-width="1"/>
<path d="M333,581.9 L336,581.9" stroke="#e6e6e6" stroke-width="1"/>
<path d="M318,588.9 L336,588.9" stroke="#dddddd" stroke-width="1"/>
<text x="0" y="0" font-size="8.5" fill="#777" transform="translate(327,593.4) rotate(-90)" text-anchor="end">8</text>
<path d="M333,595.9 L336,595.9" stroke="#e6e6e6" stroke-width="1"/>
<path d="M331,603.0 L336,603.0" stroke="#e3e3e3" stroke-width="1"/>
<path d="M333,610.0 L336,610.0" stroke="#e6e6e6" stroke-width="1"/>
<path d="M328,617.0 L336,617.0" stroke="#e3e3e3" stroke-width="1"/>
<path d="M333,624.1 L336,624.1" stroke="#e6e6e6" stroke-width="1"/>
<path d="M331,631.1 L336,631.1" stroke="#e3e3e3" stroke-width="1"/>
<path d="M333,638.2 L336,638.2" stroke="#e6e6e6" stroke-width="1"/>
<path d="M318,645.2 L336,645.2" stroke="#dddddd" stroke-width="1"/>
<text x="0" y="0" font-size="8.5" fill="#777" transform="translate(327,649.7) rotate(-90)" text-anchor="end">9</text>
<path d="M333,652.2 L336,652.2" stroke="#e6e6e6" stroke-width="1"/>
<path d="M331,659.3 L336,659.3" stroke="#e3e3e3" stroke-width="1"/>
<path d="M333,666.3 L336,666.3" stroke="#e6e6e6" stroke-width="1"/>
<path d="M328,673.4 L336,673.4" stroke="#e3e3e3" stroke-width="1"/>
<path d="M333,680.4 L336,680.4" stroke="#e6e6e6" stroke-width="1"/>
<path d="M331,687.4 L336,687.4" stroke="#e3e3e3" stroke-width="1"/>
<path d="M333,694.5 L336,694.5" stroke="#e6e6e6" stroke-width="1"/>
<path d="M318,701.5 L336,701.5" stroke="#dddddd" stroke-width="1"/>
<text x="0" y="0" font-size="8.5" fill="#777" transform="translate(327,706.0) rotate(-90)" text-anchor="end">10</text>
<path d="M333,708.5 L336,708.5" stroke="#e6e6e6" stroke-width="1"/>
<path d="M331,715.6 L336,715.6" stroke="#e3e3e3" stroke-width="1"/>
<path d="M333,722.6 L336,722.6" stroke="#e6e6e6" stroke-width="1"/>
<path d="M328,729.6 L336,729.6" stroke="#e3e3e3" stroke-width="1"/>
<path d="M333,736.7 L336,736.7" stroke="#e6e6e6" stroke-width="1"/>
<path d="M331,743.7 L336,743.7" stroke="#e3e3e3" stroke-width="1"/>
<path d="M333,750.8 L336,750.8" stroke="#e6e6e6" stroke-width="1"/>
<path d="M318,757.8 L336,757.8" stroke="#dddddd" stroke-width="1"/>
<text x="0" y="0" font-size="8.5" fill="#777" transform="translate(327,762.3) rotate(-90)" text-anchor="end">11</text>
<path d="M333,764.8 L336,764.8" stroke="#e6e6e6" stroke-width="1"/>
<path d="M331,771.9 L336,771.9" stroke="#e3e3e3" stroke-width="1"/>
<path d="M333,778.9 L336,778.9" stroke="#e6e6e6" stroke-width="1"/>
<path d="M328,785.9 L336,785.9" stroke="#e3e3e3" stroke-width="1"/>
<path d="M333,793.0 L336,793.0" stroke="#e6e6e6" stroke-width="1"/>
<path d="M331,800.0 L336,800.0" stroke="#e3e3e3" stroke-width="1"/>
<path d="M333,807.1 L336,807.1" stroke="#e6e6e6" stroke-width="1"/>
<path d="M318,814.1 L336,814.1" stroke="#dddddd" stroke-width="1"/>
<text x="0" y="0" font-size="8.5" fill="#777" transform="translate(327,818.6) rotate(-90)" text-anchor="end">12</text>
<path d="M333,821.1 L336,821.1" stroke="#e6e6e6" stroke-width="1"/>
</svg>


<!-- zoom pill -->
<div class="a" style="left:343.5px;top:795.5px;width:95px;height:25px;border-radius:12.5px;background:#efefef"></div>
<svg style="left:347px;top:800px" width="90" height="18" viewBox="0 0 90 18"><circle cx="9" cy="9" r="7.3" fill="none" stroke="#c4c4c4" stroke-width="1.2"/><path d="M5,9 L13,9" stroke="#c4c4c4" stroke-width="1.2"/><circle cx="76" cy="9" r="7.3" fill="none" stroke="#c4c4c4" stroke-width="1.2"/><path d="M72,9 L80,9 M76,5 L76,13" stroke="#c4c4c4" stroke-width="1.2"/></svg>
<div class="t" style="left:370px;top:802px;font-size:13.5px;color:#c2c2c2">100%</div>

<!-- CANVAS DESIGNS -->
<svg style="left:0;top:0" width="1500" height="840" viewBox="0 0 1500 840">
<defs>
<clipPath id="cv"><rect x="337" y="139" width="911" height="688"/></clipPath>
<g id="spider"><path d="M44.8,0.0 L38.4,1.7 L46.4,4.1 L37.9,5.0 L45.2,8.0 L38.1,8.5 L41.8,11.3 L37.6,12.0 L40.5,14.9 L36.1,15.1 L39.1,18.4 L33.7,17.8 L38.9,22.8 L33.8,21.9 L35.3,25.2 L30.2,23.6 L35.0,30.0 L29.5,27.7 L31.9,32.7 L25.8,28.9 L30.2,37.1 L22.4,30.2 L26.3,39.0 L19.9,32.7 L20.8,37.8 L16.6,33.9 L17.6,40.3 L14.2,37.1 L13.6,41.0 L10.6,37.5 L10.4,44.4 L7.0,37.7 L6.2,44.7 L3.4,37.3 L1.9,42.4 L0.0,37.8 L-2.1,45.8 L-3.5,38.3 L-6.0,43.4 L-7.1,38.3 L-10.1,43.5 L-10.3,36.7 L-14.6,44.1 L-14.1,36.8 L-17.4,40.0 L-17.2,35.1 L-21.7,39.6 L-20.8,34.2 L-25.9,38.5 L-22.8,30.8 L-30.2,37.1 L-25.2,28.3 L-31.3,32.1 L-29.1,27.3 L-33.0,28.3 L-30.9,24.1 L-35.0,24.9 L-33.4,21.6 L-40.5,23.7 L-35.0,18.4 L-43.1,20.3 L-35.8,15.0 L-43.8,16.1 L-37.8,12.0 L-44.5,12.0 L-38.4,8.6 L-46.9,8.3 L-40.5,5.4 L-45.4,4.0 L-40.0,1.8 L-43.3,0.0 L-40.1,-1.8 L-46.4,-4.1 L-40.6,-5.4 L-46.8,-8.3 L-37.9,-8.5 L-43.5,-11.8 L-38.0,-12.1 L-40.4,-14.8 L-36.2,-15.2 L-39.6,-18.7 L-33.8,-17.8 L-37.2,-21.8 L-33.6,-21.8 L-35.4,-25.2 L-30.3,-23.7 L-34.0,-29.1 L-29.4,-27.5 L-30.0,-30.8 L-25.9,-29.0 L-28.7,-35.3 L-23.9,-32.2 L-26.2,-38.9 L-20.8,-34.1 L-21.1,-38.4 L-17.0,-34.7 L-17.7,-40.5 L-14.3,-37.3 L-14.9,-45.0 L-10.2,-36.3 L-9.8,-42.0 L-6.9,-37.3 L-5.9,-43.0 L-3.5,-38.5 L-2.1,-45.3 L-0.0,-38.0 L1.9,-42.1 L3.5,-38.3 L6.0,-43.7 L7.1,-38.3 L10.7,-46.1 L10.7,-37.9 L14.2,-42.7 L14.0,-36.6 L18.4,-42.1 L16.6,-33.7 L22.7,-41.4 L20.7,-33.9 L26.3,-39.1 L23.7,-32.0 L28.2,-34.6 L25.8,-28.9 L30.1,-30.9 L28.8,-27.0 L32.6,-27.9 L29.9,-23.3 L35.7,-25.4 L32.1,-20.8 L38.5,-22.6 L33.6,-17.7 L38.7,-18.3 L35.4,-14.8 L40.8,-15.0 L37.2,-11.8 L41.6,-11.2 L39.6,-8.9 L45.6,-8.1 L38.1,-5.1 L44.2,-3.9 L39.0,-1.7Z" fill="#000"/><path d="M-57.6,-38 Q-35,-40 -18,-22 M-67,-14 Q-48,-22 -30,-14 M-64,24 Q-55,6 -35,2 M-40.6,51 Q-42,30 -28,18 M57.6,-38 Q35,-40 18,-22 M67,-14 Q48,-22 30,-14 M64,24 Q55,6 35,2 M40.6,51 Q42,30 28,18" fill="none" stroke="#000" stroke-width="7" stroke-linecap="round"/></g>
</defs>
<g clip-path="url(#cv)">
<rect x="426" y="161" width="564" height="394" fill="#d8572b" stroke="#b0421c" stroke-width="1"/>
<rect x="720" y="174" width="257" height="367" fill="#000"/>
<rect x="727.5" y="181" width="107.5" height="162.5" fill="#a23493"/>
<rect x="862" y="181" width="108" height="162.5" fill="#a23493"/>
<rect x="727.5" y="369.5" width="107.5" height="165" fill="#a23493"/>
<rect x="862" y="369.5" width="108" height="165" fill="#a23493"/>
<rect x="841.8" y="174" width="13.2" height="367" fill="#d8572b"/>
<rect x="720" y="350" width="257" height="12.5" fill="#d8572b"/>
<circle cx="848.5" cy="356.5" r="104.5" fill="#000"/>
<rect x="841.8" y="248" width="13.2" height="218" fill="#d8572b"/>
<rect x="740" y="350" width="217" height="12.5" fill="#d8572b"/>
<circle cx="848.5" cy="356.5" r="97" fill="#d8572b"/>
<circle cx="848.5" cy="356.5" r="87.5" fill="#fdfdfd"/>
<use href="#spider" x="547" y="353.5"/>
<use href="#spider" x="849" y="358"/>
<ellipse cx="837" cy="372.8" rx="9.7" ry="12.4" fill="#fff" transform="rotate(-8 837 372.8)"/>
<ellipse cx="860.6" cy="372.8" rx="10" ry="12.4" fill="#fff" transform="rotate(-8 860.6 372.8)"/>
<circle cx="839.7" cy="377.5" r="3.8" fill="#000"/>
<circle cx="858.3" cy="377.5" r="3.8" fill="#000"/>
<rect x="426" y="583.5" width="254" height="260" fill="#000"/>
<rect x="433" y="590.5" width="240" height="260" fill="#f99d2a"/>
<circle cx="551.8" cy="764.9" r="82" fill="none" stroke="#fcfcfc" stroke-width="10.7"/>
<circle cx="551.8" cy="764.9" r="87.3" fill="none" stroke="#333" stroke-width="0.6"/>
<rect x="723" y="583.5" width="254" height="260" fill="#000"/>
<rect x="730" y="590.5" width="240" height="260" fill="#f8f8f8"/>
<circle cx="850.7" cy="764" r="84.7" fill="#000"/>
</g>
</svg>

<!-- canvas scrollbars -->
<div class="a" style="left:1248px;top:120px;width:14px;height:707px;background:#f1f1f1"></div>
<div class="a" style="left:1249px;top:134px;width:12px;height:35px;background:#c1c1c1"></div>
<svg style="left:1251px;top:124px" width="8" height="5" viewBox="0 0 8 5"><path d="M0.5,5 L4,0.5 L7.5,5Z" fill="#777"/></svg>
<svg style="left:1251px;top:818px" width="8" height="5" viewBox="0 0 8 5"><path d="M0,0 L4,5 L8,0Z" fill="#555"/></svg>
<div class="a" style="left:316px;top:827px;width:946px;height:13px;background:#f1f1f1"></div>
<div class="a" style="left:333px;top:828px;width:57px;height:12px;background:#c1c1c1"></div>
<svg style="left:322px;top:830px" width="5" height="8" viewBox="0 0 5 8"><path d="M5,0 L0,4 L5,8Z" fill="#777"/></svg>
<svg style="left:1238px;top:830px" width="5" height="8" viewBox="0 0 5 8"><path d="M0,0 L5,4 L0,8Z" fill="#555"/></svg>


<!-- RIGHT PANEL -->
<div class="a" style="left:1263px;top:83px;width:234px;height:757px;background:#fff;border-left:1px solid #e6e6e6"></div>

<!-- right panel content -->
<div class="t" style="left:1277px;top:95px;font-size:10.6px;font-weight:bold;color:#1b7d5e">Layers</div>
<div class="t" style="left:1336px;top:95px;font-size:11.4px;color:#555">Color Sync</div>
<div class="a" style="left:1264px;top:118px;width:233px;height:1px;background:#e6e6e6"></div>
<div class="a" style="left:1264px;top:116px;width:59px;height:3px;background:#1b7d5e"></div>
<svg style="left:1278px;top:129px" width="17" height="16" viewBox="0 0 17 16"><path d="M1,4 L1,1 L4,1 M13,1 L16,1 L16,4 M16,12 L16,15 L13,15 M4,15 L1,15 L1,12" fill="none" stroke="#ddd" stroke-width="1.1"/><rect x="4" y="4" width="7" height="6" fill="none" stroke="#ddd" stroke-width="1.1"/><circle cx="10" cy="10" r="3.5" fill="#fff" stroke="#ddd" stroke-width="1.1"/></svg>
<svg style="left:1310px;top:129px" width="16" height="16" viewBox="0 0 16 16"><rect x="1" y="1" width="10" height="10" fill="none" stroke="#ddd" stroke-width="1.1"/><rect x="5" y="5" width="10" height="10" fill="#fff" stroke="#ddd" stroke-width="1.1"/><path d="M10,7.5 L10,12.5 M7.5,10 L12.5,10" stroke="#ddd" stroke-width="1.1"/></svg>
<svg style="left:1342px;top:129px" width="14" height="16" viewBox="0 0 14 16"><path d="M1,3 L13,3 M5,3 L5,1 L9,1 L9,3 M2.5,3 L3.5,15 L10.5,15 L11.5,3 M5.5,6 L5.5,12 M8.5,6 L8.5,12" fill="none" stroke="#ddd" stroke-width="1.1"/></svg>
<div class="a" style="left:1264px;top:156px;width:233px;height:1px;background:#eeeeee"></div>
<div class="a" style="left:1264px;top:157px;width:233px;height:607px;overflow:hidden">
<div class="a" style="left:0;top:0;width:233px;height:607px">
<svg style="left:30px;top:12.5px" width="15" height="21" viewBox="0 0 15 21"><rect x="1.5" y="1.5" width="12" height="18" fill="#fafafa" stroke="#999" stroke-width="1"/></svg>
<div class="t" style="left:54px;top:9.5px;font-size:11.4px;color:#5a5a5a">svg-01-spider-card-craft...</div>
<div class="t" style="left:54px;top:25.5px;font-size:11px;color:#9c9c9c">Basic Cut</div>
<svg style="left:30px;top:57.9px" width="15" height="21" viewBox="0 0 15 21"><rect x="1" y="1" width="13" height="19" fill="#000"/></svg>
<div class="t" style="left:54px;top:54.9px;font-size:11.4px;color:#5a5a5a">svg-01-spider-card-craft...</div>
<div class="t" style="left:54px;top:70.9px;font-size:11px;color:#9c9c9c">Basic Cut</div>
<svg style="left:30px;top:103.3px" width="15" height="21" viewBox="0 0 15 21"><rect x="1" y="1" width="13" height="19" fill="#f99d2a" stroke="#555" stroke-width="0.5"/><circle cx="7.5" cy="12" r="4.2" fill="none" stroke="#333" stroke-width="1.2"/></svg>
<div class="t" style="left:54px;top:100.3px;font-size:11.4px;color:#5a5a5a">svg-01-spider-card-craft...</div>
<div class="t" style="left:54px;top:116.3px;font-size:11px;color:#9c9c9c">Basic Cut</div>
<svg style="left:30px;top:148.7px" width="15" height="21" viewBox="0 0 15 21"><rect x="1" y="1" width="13" height="19" fill="#000"/><circle cx="7.5" cy="11" r="4.3" fill="#fff"/></svg>
<div class="t" style="left:54px;top:145.7px;font-size:11.4px;color:#5a5a5a">svg-01-spider-card-craft...</div>
<div class="t" style="left:54px;top:161.7px;font-size:11px;color:#9c9c9c">Basic Cut</div>
<svg style="left:30px;top:194.1px" width="15" height="21" viewBox="0 0 15 21"><ellipse cx="7.5" cy="11" rx="6.5" ry="8.5" fill="#fff" stroke="#888" stroke-width="0.9"/><circle cx="5.5" cy="13.5" r="2.5" fill="none" stroke="#888" stroke-width="0.8"/></svg>
<div class="t" style="left:54px;top:191.1px;font-size:11.4px;color:#5a5a5a">svg-01-spider-card-craft...</div>
<div class="t" style="left:54px;top:207.1px;font-size:11px;color:#9c9c9c">Basic Cut</div>
<svg style="left:30px;top:239.5px" width="15" height="21" viewBox="0 0 15 21"><ellipse cx="7.5" cy="11" rx="6.5" ry="8.5" fill="#fff" stroke="#888" stroke-width="0.9"/><circle cx="9.5" cy="14" r="2.5" fill="none" stroke="#888" stroke-width="0.8"/></svg>
<div class="t" style="left:54px;top:236.5px;font-size:11.4px;color:#5a5a5a">svg-01-spider-card-craft...</div>
<div class="t" style="left:54px;top:252.5px;font-size:11px;color:#9c9c9c">Basic Cut</div>
<svg style="left:30px;top:284.9px" width="15" height="21" viewBox="0 0 15 21"><g transform="translate(7.5,11) scale(0.12)"><use href="#spider"/></g></svg>
<div class="t" style="left:54px;top:281.9px;font-size:11.4px;color:#5a5a5a">svg-01-spider-card-craft...</div>
<div class="t" style="left:54px;top:297.9px;font-size:11px;color:#9c9c9c">Basic Cut</div>
<svg style="left:30px;top:330.3px" width="15" height="21" viewBox="0 0 15 21"><g transform="translate(7.5,11) scale(0.12)"><use href="#spider"/></g></svg>
<div class="t" style="left:54px;top:327.3px;font-size:11.4px;color:#5a5a5a">svg-01-spider-card-craft...</div>
<div class="t" style="left:54px;top:343.3px;font-size:11px;color:#9c9c9c">Basic Cut</div>
<svg style="left:30px;top:375.7px" width="15" height="21" viewBox="0 0 15 21"><path d="M1,19 L1,13 Q8,11 10,2 L14,2 L14,19Z" fill="#a23493" stroke="#222" stroke-width="0.5"/></svg>
<div class="t" style="left:54px;top:372.7px;font-size:11.4px;color:#5a5a5a">svg-01-spider-card-craft...</div>
<div class="t" style="left:54px;top:388.7px;font-size:11px;color:#9c9c9c">Basic Cut</div>
<svg style="left:30px;top:421.1px" width="15" height="21" viewBox="0 0 15 21"><path d="M1,2 L14,2 L14,19 Q10,9 1,8Z" fill="#a23493" stroke="#222" stroke-width="0.5"/></svg>
<div class="t" style="left:54px;top:418.1px;font-size:11.4px;color:#5a5a5a">svg-01-spider-card-craft...</div>
<div class="t" style="left:54px;top:434.1px;font-size:11px;color:#9c9c9c">Basic Cut</div>
<svg style="left:30px;top:466.5px" width="15" height="21" viewBox="0 0 15 21"><path d="M1,2 L14,2 L14,8 Q5,9 2,19 L1,19Z" fill="#a23493" stroke="#222" stroke-width="0.5"/></svg>
<div class="t" style="left:54px;top:463.5px;font-size:11.4px;color:#5a5a5a">svg-01-spider-card-craft...</div>
<div class="t" style="left:54px;top:479.5px;font-size:11px;color:#9c9c9c">Basic Cut</div>
<svg style="left:30px;top:511.9px" width="15" height="21" viewBox="0 0 15 21"><path d="M1,2 L5,2 Q6,11 14,13 L14,19 L1,19Z" fill="#a23493" stroke="#222" stroke-width="0.5"/></svg>
<div class="t" style="left:54px;top:508.9px;font-size:11.4px;color:#5a5a5a">svg-01-spider-card-craft...</div>
<div class="t" style="left:54px;top:524.9px;font-size:11px;color:#9c9c9c">Basic Cut</div>
<svg style="left:30px;top:557.3px" width="15" height="21" viewBox="0 0 15 21"><path d="M1,2 L14,2 L14,19 Q13,11 1,8Z" fill="#000"/></svg>
<div class="t" style="left:54px;top:554.3px;font-size:11.4px;color:#5a5a5a">svg-01-spider-card-craft...</div>
<div class="t" style="left:54px;top:570.3px;font-size:11px;color:#9c9c9c">Basic Cut</div>
<svg style="left:30px;top:602.7px" width="15" height="21" viewBox="0 0 15 21"><path d="M9,1 L13,0 L13,6 L8,6Z" fill="#000"/></svg>
<div class="t" style="left:54px;top:599.7px;font-size:11.4px;color:#5a5a5a">svg-01-spider-card-craft...</div>
<div class="t" style="left:54px;top:615.7px;font-size:11px;color:#9c9c9c">Basic Cut</div>
</div></div>
<div class="a" style="left:1487px;top:157px;width:10px;height:607px;background:#f1f1f1"></div>
<div class="a" style="left:1488px;top:206px;width:9px;height:426px;background:#c1c1c1"></div>
<svg style="left:1488px;top:162px" width="8" height="5" viewBox="0 0 8 5"><path d="M0,5 L4,0 L8,5Z" fill="#333"/></svg>
<svg style="left:1488px;top:755px" width="8" height="5" viewBox="0 0 8 5"><path d="M0,0 L4,5 L8,0Z" fill="#333"/></svg>
<div class="a" style="left:1264px;top:764px;width:233px;height:1px;background:#eeeeee"></div>
<div class="a" style="left:1276px;top:776px;width:15px;height:15px;border:1px solid #e4e4e4;border-radius:2px"></div>
<div class="t" style="left:1298px;top:779px;font-size:10px;color:#666">Background Color</div>
<div class="a" style="left:1264px;top:803px;width:233px;height:1px;background:#eeeeee"></div>
<div class="t" style="left:1281px;top:828px;font-size:7px;color:#e0e0e0">Slice</div>
<div class="t" style="left:1318px;top:828px;font-size:7px;color:#e0e0e0">Combine</div>
<div class="t" style="left:1366px;top:828px;font-size:7px;color:#e0e0e0">Attach</div>
<div class="t" style="left:1407px;top:828px;font-size:7px;color:#e0e0e0">Flatten</div>
<div class="t" style="left:1448px;top:828px;font-size:7px;color:#e0e0e0">Contour</div>
<svg style="left:1284px;top:808px" width="16" height="16" viewBox="0 0 16 16"><rect x="1" y="1" width="9" height="9" rx="3" fill="none" stroke="#e2e2e2" stroke-width="1.1"/><rect x="5" y="5" width="9" height="9" fill="none" stroke="#e2e2e2" stroke-width="1.1"/></svg>
<svg style="left:1323px;top:808px" width="24" height="16" viewBox="0 0 24 16"><rect x="1" y="1" width="9" height="9" fill="none" stroke="#e2e2e2" stroke-width="1.1"/><circle cx="9" cy="10" r="5" fill="none" stroke="#e2e2e2" stroke-width="1.1"/><path d="M18,6 L22,6 L20,8.5Z" fill="#e2e2e2"/></svg>
<svg style="left:1368px;top:809px" width="18" height="14" viewBox="0 0 18 14"><rect x="1" y="4" width="16" height="8" fill="none" stroke="#e2e2e2" stroke-width="1.1"/><path d="M4,1 L14,1 M4,8 L14,8" stroke="#e2e2e2" stroke-width="1.1"/></svg>
<svg style="left:1412px;top:806px" width="16" height="17" viewBox="0 0 16 17"><path d="M8,1 L8,8 M5,5 L8,8 L11,5 M1,9 Q8,16 15,9" fill="none" stroke="#e2e2e2" stroke-width="1.1"/></svg>
<svg style="left:1453px;top:806px" width="18" height="18" viewBox="0 0 18 18"><circle cx="9" cy="9" r="7.5" fill="none" stroke="#e2e2e2" stroke-width="1.1" stroke-dasharray="2 2"/></svg>

<div class="a" style="left:1497px;top:31px;width:1px;height:809px;background:#6a6a6a"></div>

<!-- collapse tab -->
<div class="a" style="left:315px;top:421px;width:11px;height:76px;background:#fff;border-radius:0 6px 6px 0;box-shadow:1px 0 1px rgba(0,0,0,0.08)"></div>
<svg style="left:316px;top:455px" width="6" height="10" viewBox="0 0 6 10"><path d="M5,1 L1,5 L5,9" fill="none" stroke="#333" stroke-width="1.4"/></svg>
<!-- arrows -->
<svg style="left:0;top:0" width="300" height="840" viewBox="0 0 300 840">
<path d="M167.8,87.3 L180,95.1 L153.4,135.7 L171.3,147.1 L119.3,171.8 L122.3,114.1 L140.9,126.3Z" fill="#156e83" stroke="#fff" stroke-width="1.6" stroke-linejoin="round" paint-order="stroke"/>
<path d="M44.3,358.6 L94.8,385.7 L76.5,397.6 L145,514.6 L132.9,522.1 L63.8,404.8 L43.8,415.7Z" fill="#156e83" stroke="#fff" stroke-width="1.6" stroke-linejoin="round" paint-order="stroke"/>
</svg>
<!-- watermark band -->
<div class="a" style="left:0;top:778.5px;width:336px;height:62px;background:rgba(255,255,255,0.5)"></div>
<div class="t wm" style="left:15.4px;transform:scaleX(0.91)">Craft</div>
<div class="t wm" style="left:113px;transform:scaleX(1)">with</div>
<div class="t wm" style="left:210px;transform:scaleX(0.966)">Sarah</div>

</body></html>
